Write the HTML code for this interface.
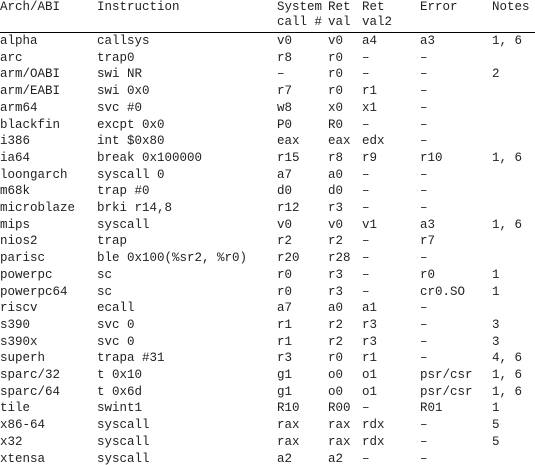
<!DOCTYPE html>
<html><head><meta charset="utf-8"><style>
html,body{margin:0;padding:0;background:#fff;width:535px;height:465px;overflow:hidden}
body{position:relative;font-family:"Liberation Mono",monospace;font-size:12.5px;color:#222}
.r{position:absolute;left:0;height:15px;line-height:15px;white-space:pre;width:535px}
.r span{position:absolute;top:0}
.c0{left:0}.c1{left:97px}.c2{left:277px}.c3{left:328px}.c4{left:362px}.c5{left:420px}.c6{left:492px}
.rule{position:absolute;left:0;width:535px;top:32px;height:1px;background:#000}
</style></head><body>
<div class="r" style="top:-0.5px"><span class="c0">Arch/ABI</span><span class="c1">Instruction</span><span class="c2">System</span><span class="c3">Ret</span><span class="c4">Ret</span><span class="c5">Error</span><span class="c6">Notes</span></div>
<div class="r" style="top:14.5px"><span class="c2">call #</span><span class="c3">val</span><span class="c4">val2</span></div>
<div class="rule"></div>
<div id="rows"></div>
<script>
var d=[
["alpha","callsys","v0","v0","a4","a3","1, 6"],
["arc","trap0","r8","r0","–","–",""],
["arm/OABI","swi NR","–","r0","–","–","2"],
["arm/EABI","swi 0x0","r7","r0","r1","–",""],
["arm64","svc #0","w8","x0","x1","–",""],
["blackfin","excpt 0x0","P0","R0","–","–",""],
["i386","int $0x80","eax","eax","edx","–",""],
["ia64","break 0x100000","r15","r8","r9","r10","1, 6"],
["loongarch","syscall 0","a7","a0","–","–",""],
["m68k","trap #0","d0","d0","–","–",""],
["microblaze","brki r14,8","r12","r3","–","–",""],
["mips","syscall","v0","v0","v1","a3","1, 6"],
["nios2","trap","r2","r2","–","r7",""],
["parisc","ble 0x100(%sr2, %r0)","r20","r28","–","–",""],
["powerpc","sc","r0","r3","–","r0","1"],
["powerpc64","sc","r0","r3","–","cr0.SO","1"],
["riscv","ecall","a7","a0","a1","–",""],
["s390","svc 0","r1","r2","r3","–","3"],
["s390x","svc 0","r1","r2","r3","–","3"],
["superh","trapa #31","r3","r0","r1","–","4, 6"],
["sparc/32","t 0x10","g1","o0","o1","psr/csr","1, 6"],
["sparc/64","t 0x6d","g1","o0","o1","psr/csr","1, 6"],
["tile","swint1","R10","R00","–","R01","1"],
["x86-64","syscall","rax","rax","rdx","–","5"],
["x32","syscall","rax","rax","rdx","–","5"],
["xtensa","syscall","a2","a2","–","–",""]];
var h="";
for(var i=0;i<d.length;i++){
h+='<div class="r" style="top:'+(34+i*16.7).toFixed(2)+'px">';
for(var j=0;j<7;j++)h+='<span class="c'+j+'">'+d[i][j]+'</span>';h+='</div>';}
document.getElementById("rows").innerHTML=h;
</script>
</body></html>
